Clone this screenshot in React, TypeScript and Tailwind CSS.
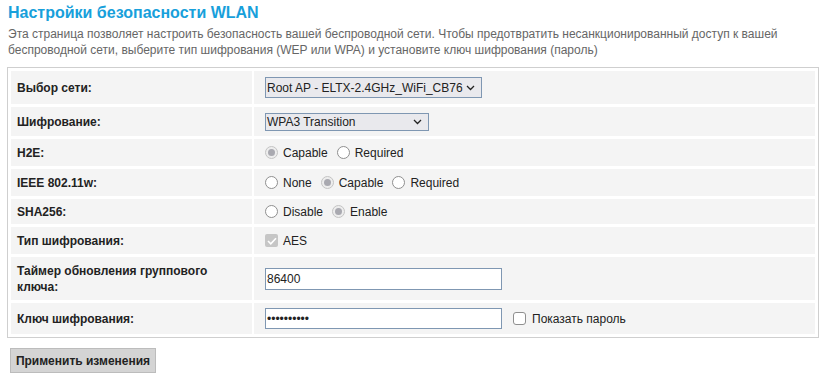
import React from "react";

const Radio: React.FC<{ checked?: boolean; label: string }> = ({ checked, label }) => (
  <span className="flex items-center mr-[9px]">
    <span
      className={
        checked
          ? "w-[13px] h-[13px] rounded-full border border-[#c4c4c4] bg-[#ededed] flex items-center justify-center"
          : "w-[13px] h-[13px] rounded-full border border-[#8f8f8f] bg-white"
      }
    >
      {checked && <span className="w-[7px] h-[7px] rounded-full bg-[#a9a9b0]" />}
    </span>
    <span className="ml-[5px]">{label}</span>
  </span>
);

const Select: React.FC<{ value: string; width: string; height: string }> = ({ value, width, height }) => (
  <div
    className={`${width} ${height} flex items-center justify-between border border-[#7f97b2] bg-[#e9e9ed] pl-[1px] pr-[6px] whitespace-nowrap`}
  >
    <span>{value}</span>
    <svg width="9" height="6" viewBox="0 0 9 6" fill="none">
      <path d="M1 1l3.5 3.5L8 1" stroke="#222" strokeWidth="1.3" />
    </svg>
  </div>
);

const Row: React.FC<{ label: React.ReactNode; h: string; children: React.ReactNode }> = ({ label, h, children }) => (
  <>
    <div className={`${h} bg-[#f4f4f4] flex items-center pl-[6px] pr-[10px] font-bold text-[#222] leading-[16px]`}>
      {label}
    </div>
    <div className={`${h} bg-[#f4f4f4] flex items-center pl-[11px] text-[#222]`}>{children}</div>
  </>
);

export default function App() {
  return (
    <div className="w-[824px] h-[380px] bg-white px-[7px] pt-[2px] text-[12px]" style={{ fontFamily: '"Liberation Sans", Arial, sans-serif' }}>
      <h1 className="pl-[1px] text-[16px] leading-[21px] font-bold text-[#18a0db]">Настройки безопасности WLAN</h1>
      <p className="pl-[1px] mt-[3px] text-[12px] leading-[16px] text-[#666]">
        Эта страница позволяет настроить безопасность вашей беспроводной сети. Чтобы предотвратить несанкционированный доступ к вашей
        беспроводной сети, выберите тип шифрования (WEP или WPA) и установите ключ шифрования (пароль)
      </p>

      <div className="mt-[9px] w-[812px] border border-[#cfcfcf] p-[3px] grid grid-cols-[241px_1fr] gap-x-[2px] gap-y-[3px]">
        <Row label="Выбор сети:" h="h-[33px]">
          <Select value="Root AP - ELTX-2.4GHz_WiFi_CB76" width="w-[217px]" height="h-[21px]" />
        </Row>
        <Row label="Шифрование:" h="h-[29px]">
          <Select value="WPA3 Transition" width="w-[164px]" height="h-[18px]" />
        </Row>
        <Row label="H2E:" h="h-[27px]">
          <Radio checked label="Capable" />
          <Radio label="Required" />
        </Row>
        <Row label="IEEE 802.11w:" h="h-[27px]">
          <Radio label="None" />
          <Radio checked label="Capable" />
          <Radio label="Required" />
        </Row>
        <Row label="SHA256:" h="h-[25px]">
          <Radio label="Disable" />
          <Radio checked label="Enable" />
        </Row>
        <Row label="Тип шифрования:" h="h-[27px]">
          <span className="w-[13px] h-[13px] rounded-[2px] bg-[#c6c6c6] flex items-center justify-center">
            <svg width="10" height="8" viewBox="0 0 10 8" fill="none">
              <path d="M1 4l2.8 2.8L9 1.2" stroke="#fff" strokeWidth="1.6" />
            </svg>
          </span>
          <span className="ml-[5px]">AES</span>
        </Row>
        <Row label="Таймер обновления группового ключа:" h="h-[43px]">
          <div className="w-[237px] h-[22px] border border-[#7f97b2] bg-white flex items-center pl-[1px]">86400</div>
        </Row>
        <Row label="Ключ шифрования:" h="h-[31px]">
          <div className="w-[237px] h-[21px] border border-[#7f97b2] bg-white flex items-center pl-[1px]">
            ••••••••••
          </div>
          <span className="ml-[11px] w-[13px] h-[13px] rounded-[3px] border border-[#8f8f8f] bg-white" />
          <span className="ml-[6px]">Показать пароль</span>
        </Row>
      </div>

      <button className="mt-[10px] ml-[3px] w-[146px] h-[25px] bg-[#d4d4d4] border border-[#bcbcbc] font-bold text-[#222] text-[12px] whitespace-nowrap">
        Применить изменения
      </button>
    </div>
  );
}
